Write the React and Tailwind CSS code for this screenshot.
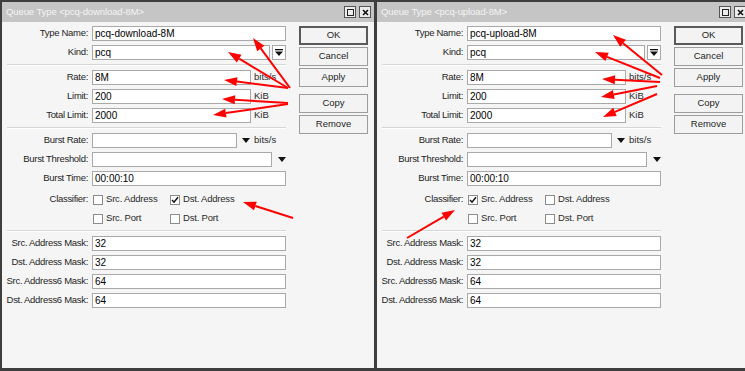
import React from 'react';

const arrows = [
  [290, 88, 253, 38],
  [288, 88, 228, 52],
  [288, 88, 224, 80],
  [288, 103, 222, 99],
  [288, 104, 213, 115],
  [293, 218, 243, 202],
  [662, 75, 613, 35],
  [660, 78, 595, 52],
  [660, 82, 602, 79],
  [657, 86, 601, 97],
  [657, 94, 603, 117],
  [407, 238, 455, 210],
];

function Arrows() {
  return (
    <svg className="absolute left-0 top-0 pointer-events-none" width="745" height="371">
      {arrows.map(([x1, y1, x2, y2], i) => {
        const dx = x2 - x1;
        const dy = y2 - y1;
        const len = Math.hypot(dx, dy);
        const ux = dx / len;
        const uy = dy / len;
        const hl = 13;
        const hw = 4.5;
        const bx = x2 - ux * hl;
        const by = y2 - uy * hl;
        const pts = `${x2},${y2} ${bx - uy * hw},${by + ux * hw} ${bx + uy * hw},${by - ux * hw}`;
        return (
          <g key={i}>
            <line x1={x1} y1={y1} x2={bx} y2={by} stroke="#ff0000" strokeWidth="2" />
            <polygon points={pts} fill="#ff0000" />
          </g>
        );
      })}
    </svg>
  );
}

function Row({ label, children, className = '' }) {
  return (
    <div className={`flex h-[15px] items-center ${className}`}>
      <span className="w-[86px] shrink-0 whitespace-nowrap text-right tracking-[-0.3px] text-[#1e1e1e]">{label}</span>
      <div className="ml-[4px] flex h-full items-center">{children}</div>
    </div>
  );
}

function Field({ value = '', className = 'w-[194px]' }) {
  return (
    <div className={`h-[15px] whitespace-nowrap border border-[#a9a9a9] bg-white px-[2px] text-[10px] leading-[13px] text-black ${className}`}>
      {value}
    </div>
  );
}

function Tri() {
  return (
    <svg width="8" height="5" viewBox="0 0 8 5">
      <polygon points="0,0 8,0 4,5" fill="#111" />
    </svg>
  );
}

function Check({ checked, label }) {
  return (
    <div className="flex items-center">
      <div className="flex h-[10px] w-[10px] items-center justify-center border border-[#8c8c8c] bg-white">
        {checked && (
          <svg width="8" height="8" viewBox="0 0 8 8">
            <path d="M1 4 L3 6.2 L7 1.2" fill="none" stroke="#111" strokeWidth="1.5" />
          </svg>
        )}
      </div>
      <span className="ml-[3px] whitespace-nowrap tracking-[-0.2px] text-[#2a2a2a]">{label}</span>
    </div>
  );
}

function Sep() {
  return <div className="ml-[5px] h-[2px] border-t border-[#d6d6d6] border-b border-b-white" />;
}

function Btn({ children, primary, className = '' }) {
  return (
    <div
      className={`flex h-[19px] w-[69px] items-center justify-center bg-[#f3f3f3] text-[#1e1e1e] ${
        primary ? 'border-2 border-[#5a5a5a]' : 'border border-[#9c9c9c]'
      } ${className}`}
    >
      {children}
    </div>
  );
}

function QueueWindow({ name, srcChecked, dstChecked }) {
  return (
    <div className="flex h-[366px] w-[372px] shrink-0 flex-col bg-[#f5f5f5]">
      <div className="flex h-[20px] items-center bg-[#c5c5c5] pl-[4px] pr-[3px]">
        <span className="text-[9.5px] tracking-[-0.1px] text-[#f4f4f4]">Queue Type &lt;{name}&gt;</span>
        <div className="ml-auto flex gap-[3px]">
          <div className="flex h-[12px] w-[12px] items-center justify-center border border-[#555] bg-[#ececec]">
            <div className="h-[7px] w-[7px] border border-[#222]" />
          </div>
          <div className="flex h-[12px] w-[12px] items-center justify-center border border-[#555] bg-[#ececec]">
            <svg width="7" height="7" viewBox="0 0 7 7">
              <path d="M1 1 L6 6 M6 1 L1 6" stroke="#111" strokeWidth="1.6" />
            </svg>
          </div>
        </div>
      </div>

      <div className="flex pt-[4px]">
        <div className="flex w-[284px] flex-col gap-[4px]">
          <Row label="Type Name:">
            <Field value={name} />
          </Row>
          <Row label="Kind:">
            <Field value="pcq" className="w-[178px]" />
            <div className="ml-[2px] flex h-[15px] w-[14px] items-center justify-center border border-[#a9a9a9] bg-white">
              <svg width="8" height="7" viewBox="0 0 8 7">
                <rect x="0" y="0" width="8" height="1.3" fill="#111" />
                <polygon points="0,2.5 8,2.5 4,7" fill="#111" />
              </svg>
            </div>
          </Row>
          <Sep />
          <Row label="Rate:">
            <Field value="8M" className="w-[159px]" />
            <span className="ml-[3px] text-[#2a2a2a]">bits/s</span>
          </Row>
          <Row label="Limit:">
            <Field value="200" className="w-[159px]" />
            <span className="ml-[3px] text-[#2a2a2a]">KiB</span>
          </Row>
          <Row label="Total Limit:">
            <Field value="2000" className="w-[159px]" />
            <span className="ml-[3px] text-[#2a2a2a]">KiB</span>
          </Row>
          <Sep />
          <Row label="Burst Rate:">
            <Field className="w-[145px]" />
            <div className="ml-[5px]">
              <Tri />
            </div>
            <span className="ml-[4px] text-[#2a2a2a]">bits/s</span>
          </Row>
          <Row label="Burst Threshold:">
            <Field className="w-[180px]" />
            <div className="ml-[6px]">
              <Tri />
            </div>
          </Row>
          <Row label="Burst Time:">
            <Field value="00:00:10" />
          </Row>
          <Row label="Classifier:" className="mt-[2px]">
            <div className="ml-[1px] grid grid-cols-[77px_80px]">
              <Check checked={srcChecked} label="Src. Address" />
              <Check checked={dstChecked} label="Dst. Address" />
            </div>
          </Row>
          <Row label="">
            <div className="ml-[1px] grid grid-cols-[77px_80px]">
              <Check label="Src. Port" />
              <Check label="Dst. Port" />
            </div>
          </Row>
          <Sep />
          <Row label="Src. Address Mask:">
            <Field value="32" />
          </Row>
          <Row label="Dst. Address Mask:">
            <Field value="32" />
          </Row>
          <Row label="Src. Address6 Mask:">
            <Field value="64" />
          </Row>
          <Row label="Dst. Address6 Mask:">
            <Field value="64" />
          </Row>
        </div>

        <div className="ml-[13px] flex flex-col gap-[2px]">
          <Btn primary>OK</Btn>
          <Btn>Cancel</Btn>
          <Btn>Apply</Btn>
          <Btn className="mt-[5px]">Copy</Btn>
          <Btn>Remove</Btn>
        </div>
      </div>
    </div>
  );
}

export default function App() {
  return (
    <div className="relative flex h-[371px] w-[745px] gap-[3px] overflow-hidden bg-[#3e3e3e] pl-[2px] pt-[2px] font-['Liberation_Sans',Arial,sans-serif] text-[9.5px]">
      <QueueWindow name="pcq-download-8M" srcChecked={false} dstChecked />
      <QueueWindow name="pcq-upload-8M" srcChecked dstChecked={false} />
      <Arrows />
    </div>
  );
}
